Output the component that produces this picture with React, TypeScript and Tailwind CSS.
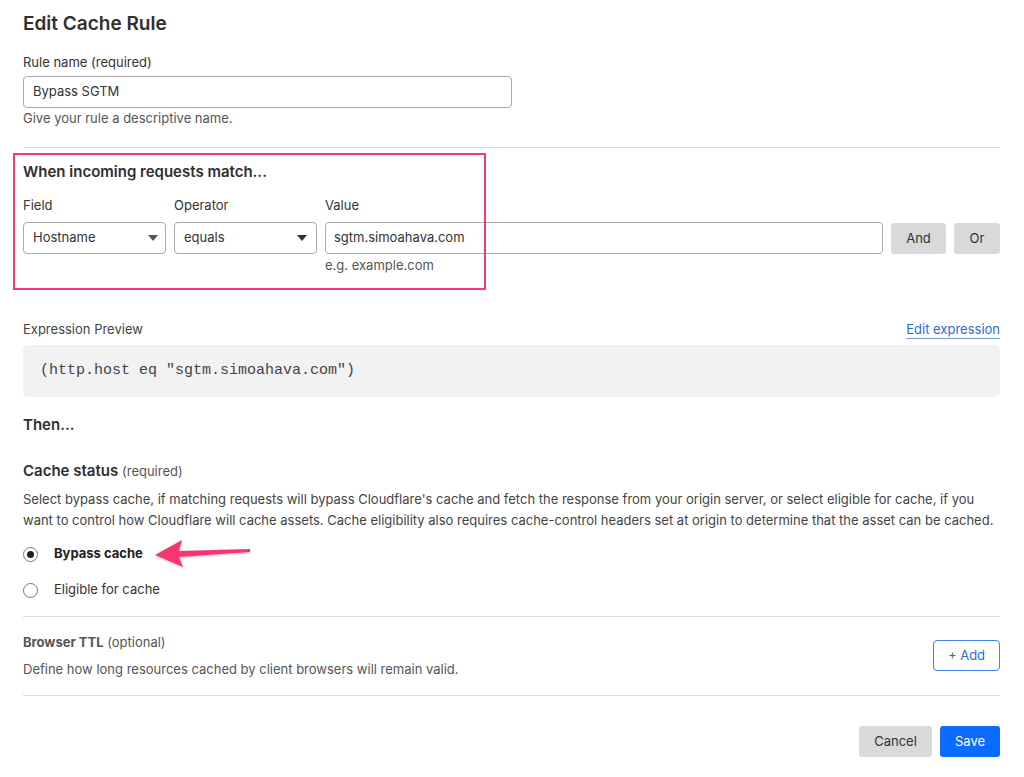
export default function App() {
  return (
    <div className="relative w-[1024px] h-[777px] bg-white text-[#333] font-['Inter','Liberation_Sans',sans-serif] overflow-hidden">
      <div className="flex flex-col pl-[23px] pr-[24px] pt-[12px] w-[1024px]">
        <h1 className="text-[19px] leading-[24px] font-semibold text-[#2f2f2f]">Edit Cache Rule</h1>

        <label className="mt-[17px] text-[13px] leading-[18px]">Rule name (required)</label>
        <div className="mt-[5px] w-[489px] h-[32px] border border-[#a9a9a9] rounded-[4px] flex items-center px-[9px] text-[13px]">
          Bypass SGTM
        </div>
        <p className="mt-[1px] text-[13px] leading-[18px] text-[#555]">Give your rule a descriptive name.</p>

        <div className="mt-[20px] h-px bg-[#dcdcdc]" />

        <h2 className="mt-[14px] text-[15px] leading-[20px] font-semibold text-[#2f2f2f]">When incoming requests match...</h2>

        <div className="mt-[14px] flex gap-[8px]">
          <div className="flex flex-col w-[143px]">
            <span className="text-[13px] leading-[18px]">Field</span>
            <div className="mt-[8px] h-[32px] border border-[#a9a9a9] rounded-[4px] flex items-center justify-between pl-[9px] pr-[7px] text-[13px]">
              Hostname
              <svg width="10" height="6" viewBox="0 0 10 6"><path d="M0 0h10L5 6z" fill="#555" /></svg>
            </div>
          </div>
          <div className="flex flex-col w-[143px]">
            <span className="text-[13px] leading-[18px]">Operator</span>
            <div className="mt-[8px] h-[32px] border border-[#a9a9a9] rounded-[4px] flex items-center justify-between pl-[9px] pr-[9px] text-[13px]">
              equals
              <svg width="10" height="6" viewBox="0 0 10 6"><path d="M0 0h10L5 6z" fill="#333" /></svg>
            </div>
          </div>
          <div className="flex flex-col flex-1">
            <span className="text-[13px] leading-[18px]">Value</span>
            <div className="mt-[8px] h-[32px] border border-[#a9a9a9] rounded-[4px] flex items-center px-[8px] text-[13px]">
              sgtm.simoahava.com
            </div>
            <span className="mt-[2px] text-[13px] leading-[18px] text-[#555]">e.g. example.com</span>
          </div>
          <button className="mt-[27px] w-[55px] h-[31px] bg-[#d9d9d9] rounded-[3px] text-[13px] text-[#333]">And</button>
          <button className="mt-[27px] w-[46px] h-[31px] bg-[#d9d9d9] rounded-[3px] text-[13px] text-[#333]">Or</button>
        </div>

        <div className="mt-[46px] flex justify-between items-center">
          <span className="text-[13px] leading-[18px] text-[#444]">Expression Preview</span>
          <a className="text-[13px] leading-[18px] text-[#2d6ccf] underline underline-offset-[4px] decoration-[#6e9be0]">Edit expression</a>
        </div>
        <div className="mt-[7px] h-[52px] bg-[#f2f2f2] rounded-[5px] flex items-center px-[17px] font-['Liberation_Mono',monospace] text-[15px] text-[#444]">
          (http.host eq "sgtm.simoahava.com")
        </div>

        <h2 className="mt-[18px] text-[15px] leading-[20px] font-semibold text-[#2f2f2f]">Then...</h2>

        <div className="mt-[26px] text-[15px] leading-[20px] font-semibold text-[#2f2f2f]">
          Cache status <span className="text-[13px] font-normal text-[#555]">(required)</span>
        </div>
        <p className="mt-[8px] text-[13px] leading-[21px] text-[#444]">
          Select bypass cache, if matching requests will bypass Cloudflare's cache and fetch the response from your origin server, or select eligible for cache, if you want to control how Cloudflare will cache assets. Cache eligibility also requires cache-control headers set at origin to determine that the asset can be cached.
        </p>

        <div className="mt-[13px] flex items-center h-[20px]">
          <span className="w-[15px] h-[15px] rounded-full border border-[#777] flex items-center justify-center">
            <span className="w-[7px] h-[7px] rounded-full bg-[#222]" />
          </span>
          <span className="ml-[16px] text-[13px] font-bold text-[#222]">Bypass cache</span>
        </div>
        <div className="mt-[16px] flex items-center h-[20px]">
          <span className="w-[15px] h-[15px] rounded-full border border-[#777]" />
          <span className="ml-[16px] text-[13px] text-[#333]">Eligible for cache</span>
        </div>

        <div className="mt-[16px] h-px bg-[#dcdcdc]" />

        <div className="mt-[16px] flex items-center justify-between">
          <div className="flex flex-col">
            <span className="text-[13px] leading-[18px] text-[#555]">
              <span className="font-bold">Browser TTL</span> (optional)
            </span>
            <span className="mt-[9px] text-[13px] leading-[18px] text-[#555]">Define how long resources cached by client browsers will remain valid.</span>
          </div>
          <button className="w-[67px] h-[31px] border border-[#3b82f0] rounded-[4px] text-[13px] text-[#2d6ccf]">+ Add</button>
        </div>

        <div className="mt-[17px] h-px bg-[#dcdcdc]" />

        <div className="mt-[30px] flex justify-end gap-[8px]">
          <button className="w-[73px] h-[31px] bg-[#d9d9d9] rounded-[3px] text-[13px] text-[#333]">Cancel</button>
          <button className="w-[60px] h-[31px] bg-[#0b6bff] rounded-[3px] text-[13px] text-white">Save</button>
        </div>
      </div>

      {/* annotation overlays */}
      <div className="absolute left-[13px] top-[153px] w-[473px] h-[137px] border-2 border-[#f43a6e]" />
      <svg className="absolute left-[150px] top-[536px]" width="106" height="36" viewBox="0 0 106 36">
        <defs>
          <filter id="sh" x="-20%" y="-40%" width="140%" height="180%">
            <feDropShadow dx="0" dy="1" stdDeviation="1" floodColor="#000" floodOpacity="0.25" />
          </filter>
        </defs>
        <g filter="url(#sh)">
          <path d="M5 19 L32 4 L29 15 L100 13 L100 16 L29 21 L33 31 Z" fill="#f73670" />
        </g>
      </svg>
    </div>
  );
}
